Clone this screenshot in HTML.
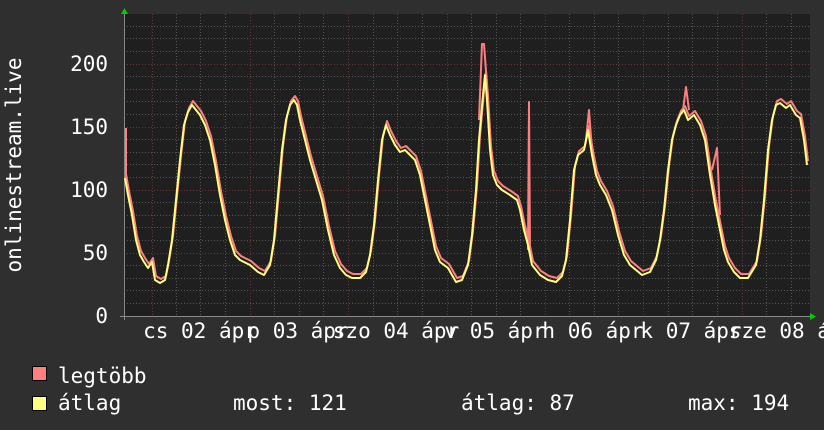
<!DOCTYPE html>
<html><head><meta charset="utf-8"><style>
html,body{margin:0;padding:0;background:#2f2f2f;}
svg{display:block}
text{font-family:"DejaVu Sans Mono","Liberation Mono",monospace;fill:#fff;font-size:21px}
</style></head><body>
<svg width="824" height="430" viewBox="0 0 824 430" xmlns="http://www.w3.org/2000/svg">
<rect x="0" y="0" width="824" height="430" fill="#2f2f2f"/>
<rect x="124" y="14" width="686" height="302" fill="#1f1f1f"/>
<g stroke="#555" stroke-width="1" stroke-dasharray="1,2">
<line x1="124" y1="303.5" x2="810" y2="303.5"/><line x1="124" y1="290.5" x2="810" y2="290.5"/><line x1="124" y1="278.5" x2="810" y2="278.5"/><line x1="124" y1="265.5" x2="810" y2="265.5"/>
<line x1="124" y1="240.5" x2="810" y2="240.5"/><line x1="124" y1="227.5" x2="810" y2="227.5"/><line x1="124" y1="215.5" x2="810" y2="215.5"/><line x1="124" y1="202.5" x2="810" y2="202.5"/>
<line x1="124" y1="177.5" x2="810" y2="177.5"/><line x1="124" y1="164.5" x2="810" y2="164.5"/><line x1="124" y1="152.5" x2="810" y2="152.5"/><line x1="124" y1="139.5" x2="810" y2="139.5"/>
<line x1="124" y1="114.5" x2="810" y2="114.5"/><line x1="124" y1="101.5" x2="810" y2="101.5"/><line x1="124" y1="89.5" x2="810" y2="89.5"/><line x1="124" y1="76.5" x2="810" y2="76.5"/>
<line x1="124" y1="51.5" x2="810" y2="51.5"/><line x1="124" y1="38.5" x2="810" y2="38.5"/><line x1="124" y1="26.5" x2="810" y2="26.5"/>
<line x1="176.5" y1="14" x2="176.5" y2="316"/><line x1="200.5" y1="14" x2="200.5" y2="316"/><line x1="225.5" y1="14" x2="225.5" y2="316"/>
<line x1="274.5" y1="14" x2="274.5" y2="316"/><line x1="299.5" y1="14" x2="299.5" y2="316"/><line x1="323.5" y1="14" x2="323.5" y2="316"/>
<line x1="373.5" y1="14" x2="373.5" y2="316"/><line x1="397.5" y1="14" x2="397.5" y2="316"/><line x1="422.5" y1="14" x2="422.5" y2="316"/>
<line x1="471.5" y1="14" x2="471.5" y2="316"/><line x1="496.5" y1="14" x2="496.5" y2="316"/><line x1="520.5" y1="14" x2="520.5" y2="316"/>
<line x1="569.5" y1="14" x2="569.5" y2="316"/><line x1="594.5" y1="14" x2="594.5" y2="316"/><line x1="618.5" y1="14" x2="618.5" y2="316"/>
<line x1="668.5" y1="14" x2="668.5" y2="316"/><line x1="692.5" y1="14" x2="692.5" y2="316"/><line x1="717.5" y1="14" x2="717.5" y2="316"/>
<line x1="766.5" y1="14" x2="766.5" y2="316"/><line x1="791.5" y1="14" x2="791.5" y2="316"/>
</g>
<g stroke="#6b3535" stroke-width="1" stroke-dasharray="1,2">
<line x1="124" y1="253.5" x2="810" y2="253.5"/><line x1="124" y1="190.5" x2="810" y2="190.5"/><line x1="124" y1="127.5" x2="810" y2="127.5"/><line x1="124" y1="64.5" x2="810" y2="64.5"/>
<line x1="152.5" y1="14" x2="152.5" y2="316"/><line x1="250.5" y1="14" x2="250.5" y2="316"/><line x1="348.5" y1="14" x2="348.5" y2="316"/><line x1="447.5" y1="14" x2="447.5" y2="316"/><line x1="545.5" y1="14" x2="545.5" y2="316"/><line x1="643.5" y1="14" x2="643.5" y2="316"/><line x1="742.5" y1="14" x2="742.5" y2="316"/>
</g>
<line x1="120" y1="316.5" x2="812" y2="316.5" stroke="#888" stroke-width="1"/>
<line x1="124.5" y1="12" x2="124.5" y2="320" stroke="#888" stroke-width="1"/>
<polygon points="121,14 124.5,8 128,14" fill="#0c0"/>
<polygon points="810,313 816,316.5 810,320" fill="#0c0"/>
<g fill="none" stroke-width="2" stroke-linejoin="round">
<g id="c" >
<polyline id="p" points="125,178 128,195 132,215 136,240 140,255 144,262 148,268 152,262 155,280 160,283 165,280 168,265 172,240 176,200 180,160 184,125 188,112 192,105 196,110 200,115 205,125 210,140 215,165 220,195 225,220 230,240 235,255 240,260 250,265 258,272 264,275 270,265 274,240 278,195 282,150 286,120 290,105 294,100 297,105 300,120 305,140 310,160 316,180 322,200 328,230 334,255 340,268 346,275 352,278 360,278 366,272 370,255 374,225 378,180 382,140 386,125 390,135 395,145 400,152 405,150 410,155 415,160 420,175 425,200 430,225 435,250 440,262 448,268 456,282 462,280 468,265 472,235 476,190 479,140 483,95 485,75 487,100 490,150 493,175 497,185 502,190 510,195 517,200 520,210 524,230 528,245 530,255 532,265 540,275 548,280 556,282 562,276 566,260 570,220 574,170 578,155 584,150 588,130 592,155 596,175 600,185 606,195 612,210 618,235 624,255 630,265 636,270 642,275 650,272 656,260 660,240 664,210 668,170 672,140 676,125 680,115 684,110 688,120 694,115 700,125 705,140 710,175 715,205 720,230 724,250 728,262 734,272 740,278 748,278 756,265 760,240 764,200 768,150 772,120 776,105 780,103 786,108 790,105 796,115 800,118 804,140 807,165"/>
</g>
<use href="#p" transform="translate(1,-4)" stroke="#ff7f7f"/>
<polyline stroke="#ff7f7f" points="126,128 126,178"/>
<polyline stroke="#ff7f7f" points="479,120 482,44 484,44 487,85"/>
<polyline stroke="#ff7f7f" points="528,250 529,102 530,250"/>
<polyline stroke="#ff7f7f" points="586,140 589,110 592,150"/>
<polyline stroke="#ff7f7f" points="683,110 686,87 689,110"/>
<polyline stroke="#ff7f7f" points="712,170 717,148 720,215"/>
<use href="#p" stroke="#ffff7f"/>
</g>
<g text-anchor="end">
<text x="108" y="323">0</text>
<text x="108" y="260">50</text>
<text x="108" y="197">100</text>
<text x="108" y="134">150</text>
<text x="108" y="71">200</text>
</g>
<text transform="translate(21,165) rotate(-90)" text-anchor="middle">onlinestream.live</text>
<g text-anchor="middle">
<text x="200" y="338">cs 02 ápr</text>
<text x="298" y="338">p 03 ápr</text>
<text x="396" y="338">szo 04 ápr</text>
<text x="495" y="338">v 05 ápr</text>
<text x="593" y="338">h 06 ápr</text>
<text x="691" y="338">k 07 ápr</text>
<text x="792" y="338">sze 08 ápr</text>
</g>
<rect x="32.5" y="366.5" width="14" height="14" fill="#ff7f7f" stroke="#000"/>
<rect x="32.5" y="396.5" width="14" height="14" fill="#ffff7f" stroke="#000"/>
<text x="58" y="383">legtöbb</text>
<text x="58" y="410">átlag</text>
<text x="233" y="410">most: 121</text>
<text x="461" y="410">átlag: 87</text>
<text x="688" y="410">max: 194</text>
</svg>
</body></html>
